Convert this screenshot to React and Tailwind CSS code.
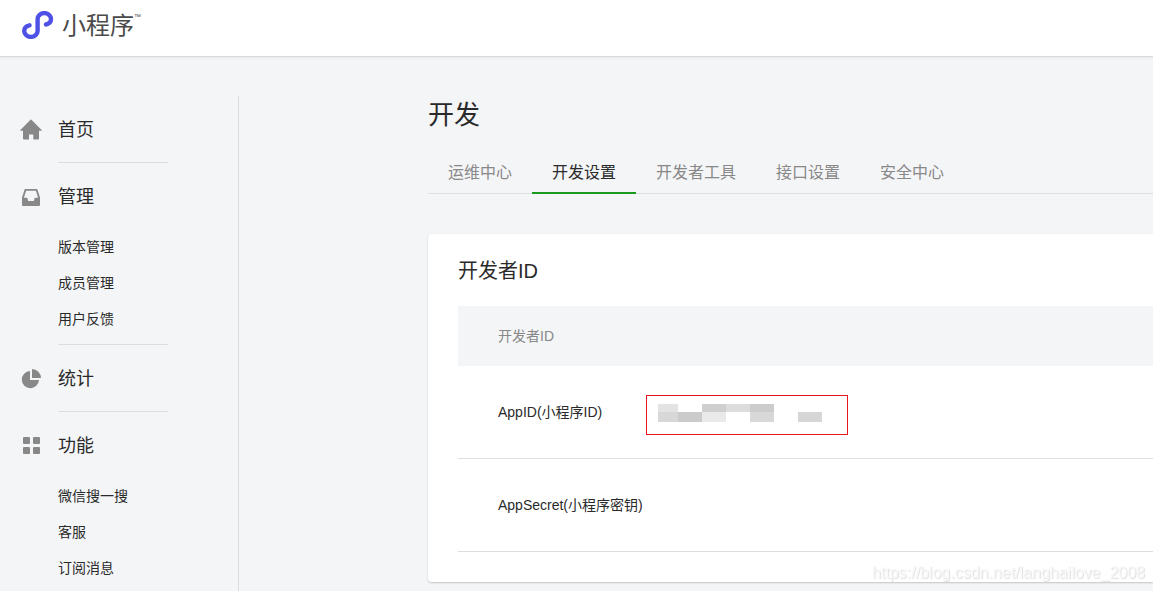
import React from 'react';

const HomeIcon = () => (
  <svg width="22" height="22" viewBox="0 0 22 22" fill="#888" aria-hidden="true">
    <path d="M10.5.8a.7.7 0 0 1 1 0l10.1 10.3a.4.4 0 0 1-.3.7H19v7.700a.9.9 0 0 1-.9.9h-4.800v-5H9v5H3.900a.9.9 0 0 1-.9-.9v-7.700H.7a.4.4 0 0 1-.3-.7z" />
  </svg>
);

const InboxIcon = () => (
  <svg width="22" height="22" viewBox="0 0 22 22" fill="#888" aria-hidden="true">
    <path
      fillRule="evenodd"
      d="M5.4 3h11.2c.4 0 .7.2.8.6L20 11.5V19a1 1 0 0 1-1 1H3a1 1 0 0 1-1-1v-7.5l2.6-7.9c.1-.4.4-.6.8-.6zm.7 1.7L3.9 11.7h3.3l1 3.3h5.6l1-3.3h3.3l-2.2-7z"
    />
  </svg>
);

const PieIcon = () => (
  <svg width="22" height="22" viewBox="0 0 22 22" fill="#888" aria-hidden="true">
    <path d="M10 3v9h9a8.6 8.6 0 1 1-9-9z" />
    <path d="M12 1a9 9 0 0 1 9 9h-9z" />
  </svg>
);

const GridIcon = () => (
  <svg width="22" height="22" viewBox="0 0 22 22" fill="#888" aria-hidden="true">
    <rect x="3" y="2" width="7" height="7" rx="1" />
    <rect x="13" y="2" width="7" height="7" rx="1" />
    <rect x="3" y="12" width="7" height="7" rx="1" />
    <rect x="13" y="12" width="7" height="7" rx="1" />
  </svg>
);

const Logo = () => (
  <svg width="32" height="28" viewBox="0 0 32 28" fill="none" aria-hidden="true">
    <path
      d="M7.5 14.3C4.4 15 2.2 17.2 2.2 20A6.7 5.9 0 0 0 15.6 20V8A6.7 5.9 0 0 1 29 8C29 10.7 27 12.8 24 13.5"
      stroke="#4f51e6"
      strokeWidth="4.4"
      strokeLinecap="round"
    />
  </svg>
);

const menu = [
  { name: '首页', icon: HomeIcon, children: [] },
  { name: '管理', icon: InboxIcon, children: ['版本管理', '成员管理', '用户反馈'] },
  { name: '统计', icon: PieIcon, children: [] },
  { name: '功能', icon: GridIcon, children: ['微信搜一搜', '客服', '订阅消息'] },
];

const tabs = ['运维中心', '开发设置', '开发者工具', '接口设置', '安全中心'];

// blocks hiding the id value
const mosaic = [
  { x: 0, y: 0, w: 20, h: 8, fill: '#e3e3e3' },
  { x: 44, y: 0, w: 24, h: 8, fill: '#cfcfcf' },
  { x: 68, y: 0, w: 24, h: 8, fill: '#dcdcdc' },
  { x: 92, y: 0, w: 24, h: 8, fill: '#cccccc' },
  { x: 0, y: 8, w: 20, h: 10, fill: '#d7d7d7' },
  { x: 20, y: 8, w: 24, h: 10, fill: '#cbcbcb' },
  { x: 44, y: 8, w: 24, h: 10, fill: '#e9e9e9' },
  { x: 92, y: 8, w: 24, h: 10, fill: '#d8d8d8' },
  { x: 140, y: 8, w: 24, h: 10, fill: '#d6d6d6' },
];

const Sidebar = () => (
  <aside className="w-[239px] shrink-0 border-r border-[#dcdde2]">
    <nav>
      <ul>
        {menu.map((group, index) => (
          <li key={group.name}>
            <a href="#" className="flex h-[66px] items-center gap-4 pl-5 pt-0.5 text-lg">
              <group.icon />
              <span>{group.name}</span>
            </a>
            {group.children.length > 0 && (
              <ul className="pb-[7px]">
                {group.children.map((child) => (
                  <li key={child}>
                    <a href="#" className="flex h-9 items-center pl-[58px] text-sm">{child}</a>
                  </li>
                ))}
              </ul>
            )}
            {index < menu.length - 1 && (
              <div className="ml-[58px] w-[110px] border-b border-[#dcdde2]"></div>
            )}
          </li>
        ))}
      </ul>
    </nav>
  </aside>
);

const DeveloperCard = () => (
  <section className="mt-10 rounded-l bg-white pb-[30px] pl-[30px] shadow-[0_1px_2px_rgba(0,0,0,0.2)]">
    <h2 className="flex h-[72px] items-center pt-px text-xl">开发者ID</h2>
    <table className="w-full text-left text-sm">
      <thead>
        <tr className="h-[60px] bg-[#f4f5f7] text-[#888]">
          <th colSpan={2} className="pl-10 font-normal">开发者ID</th>
        </tr>
      </thead>
      <tbody>
        <tr className="h-[92px] border-b border-[#dedfe4]">
          <th scope="row" className="w-[188px] pl-10 font-normal">AppID(小程序ID)</th>
          <td className="pt-1.5">
            <div className="flex h-10 w-[202px] border border-[#e8171f] pl-[11px] pt-2">
              <svg width="164" height="18" shapeRendering="crispEdges" aria-hidden="true">
                {mosaic.map((b) => (
                  <rect key={`${b.x}-${b.y}`} x={b.x} y={b.y} width={b.w} height={b.h} fill={b.fill} />
                ))}
              </svg>
            </div>
          </td>
        </tr>
        <tr className="h-[93px] border-b border-[#dedede]">
          <th scope="row" colSpan={2} className="pl-10 font-normal">AppSecret(小程序密钥)</th>
        </tr>
      </tbody>
    </table>
  </section>
);

export default function App() {
  return (
    <div className="flex h-screen flex-col overflow-hidden bg-[#f4f5f7] font-['Liberation_Sans','Noto_Sans_CJK_SC',sans-serif] text-[#2a2a2a]">
      <header className="flex h-[57px] shrink-0 items-start border-b border-[#d9d9de] bg-white pl-[22px] pt-[11px] shadow-[0_1px_2px_rgba(0,0,0,0.06)]">
        <Logo />
        <span className="ml-2 text-2xl leading-[30px] text-[#4a4a4a]">小程序</span>
        <span className="text-[7px] leading-3 text-[#4a4a4a]">™</span>
      </header>

      <div className="flex flex-1 pt-[39px]">
        <Sidebar />
        <main className="ml-[189px] min-w-0 flex-1">
          <h1 className="text-[26px] leading-[38px]">开发</h1>
          <div role="tablist" className="mt-[18px] flex border-b border-[#dedfe2]">
            {tabs.map((tab, index) => (
              <button
                key={tab}
                role="tab"
                aria-selected={index === 1}
                className={
                  index === 1
                    ? '-mb-px h-[42px] border-b-2 border-[#1a9a1f] px-5 pt-0.5'
                    : 'h-[41px] border-b border-transparent px-5 pt-0.5 text-[#888]'
                }
              >
                {tab}
              </button>
            ))}
          </div>
          <DeveloperCard />
        </main>
      </div>

      <div className="fixed bottom-2 right-2 text-base leading-5 text-[#f8f8f8] [text-shadow:1px_1px_1px_#dedede]">
        https://blog.csdn.net/langhailove_2008
      </div>
    </div>
  );
}
